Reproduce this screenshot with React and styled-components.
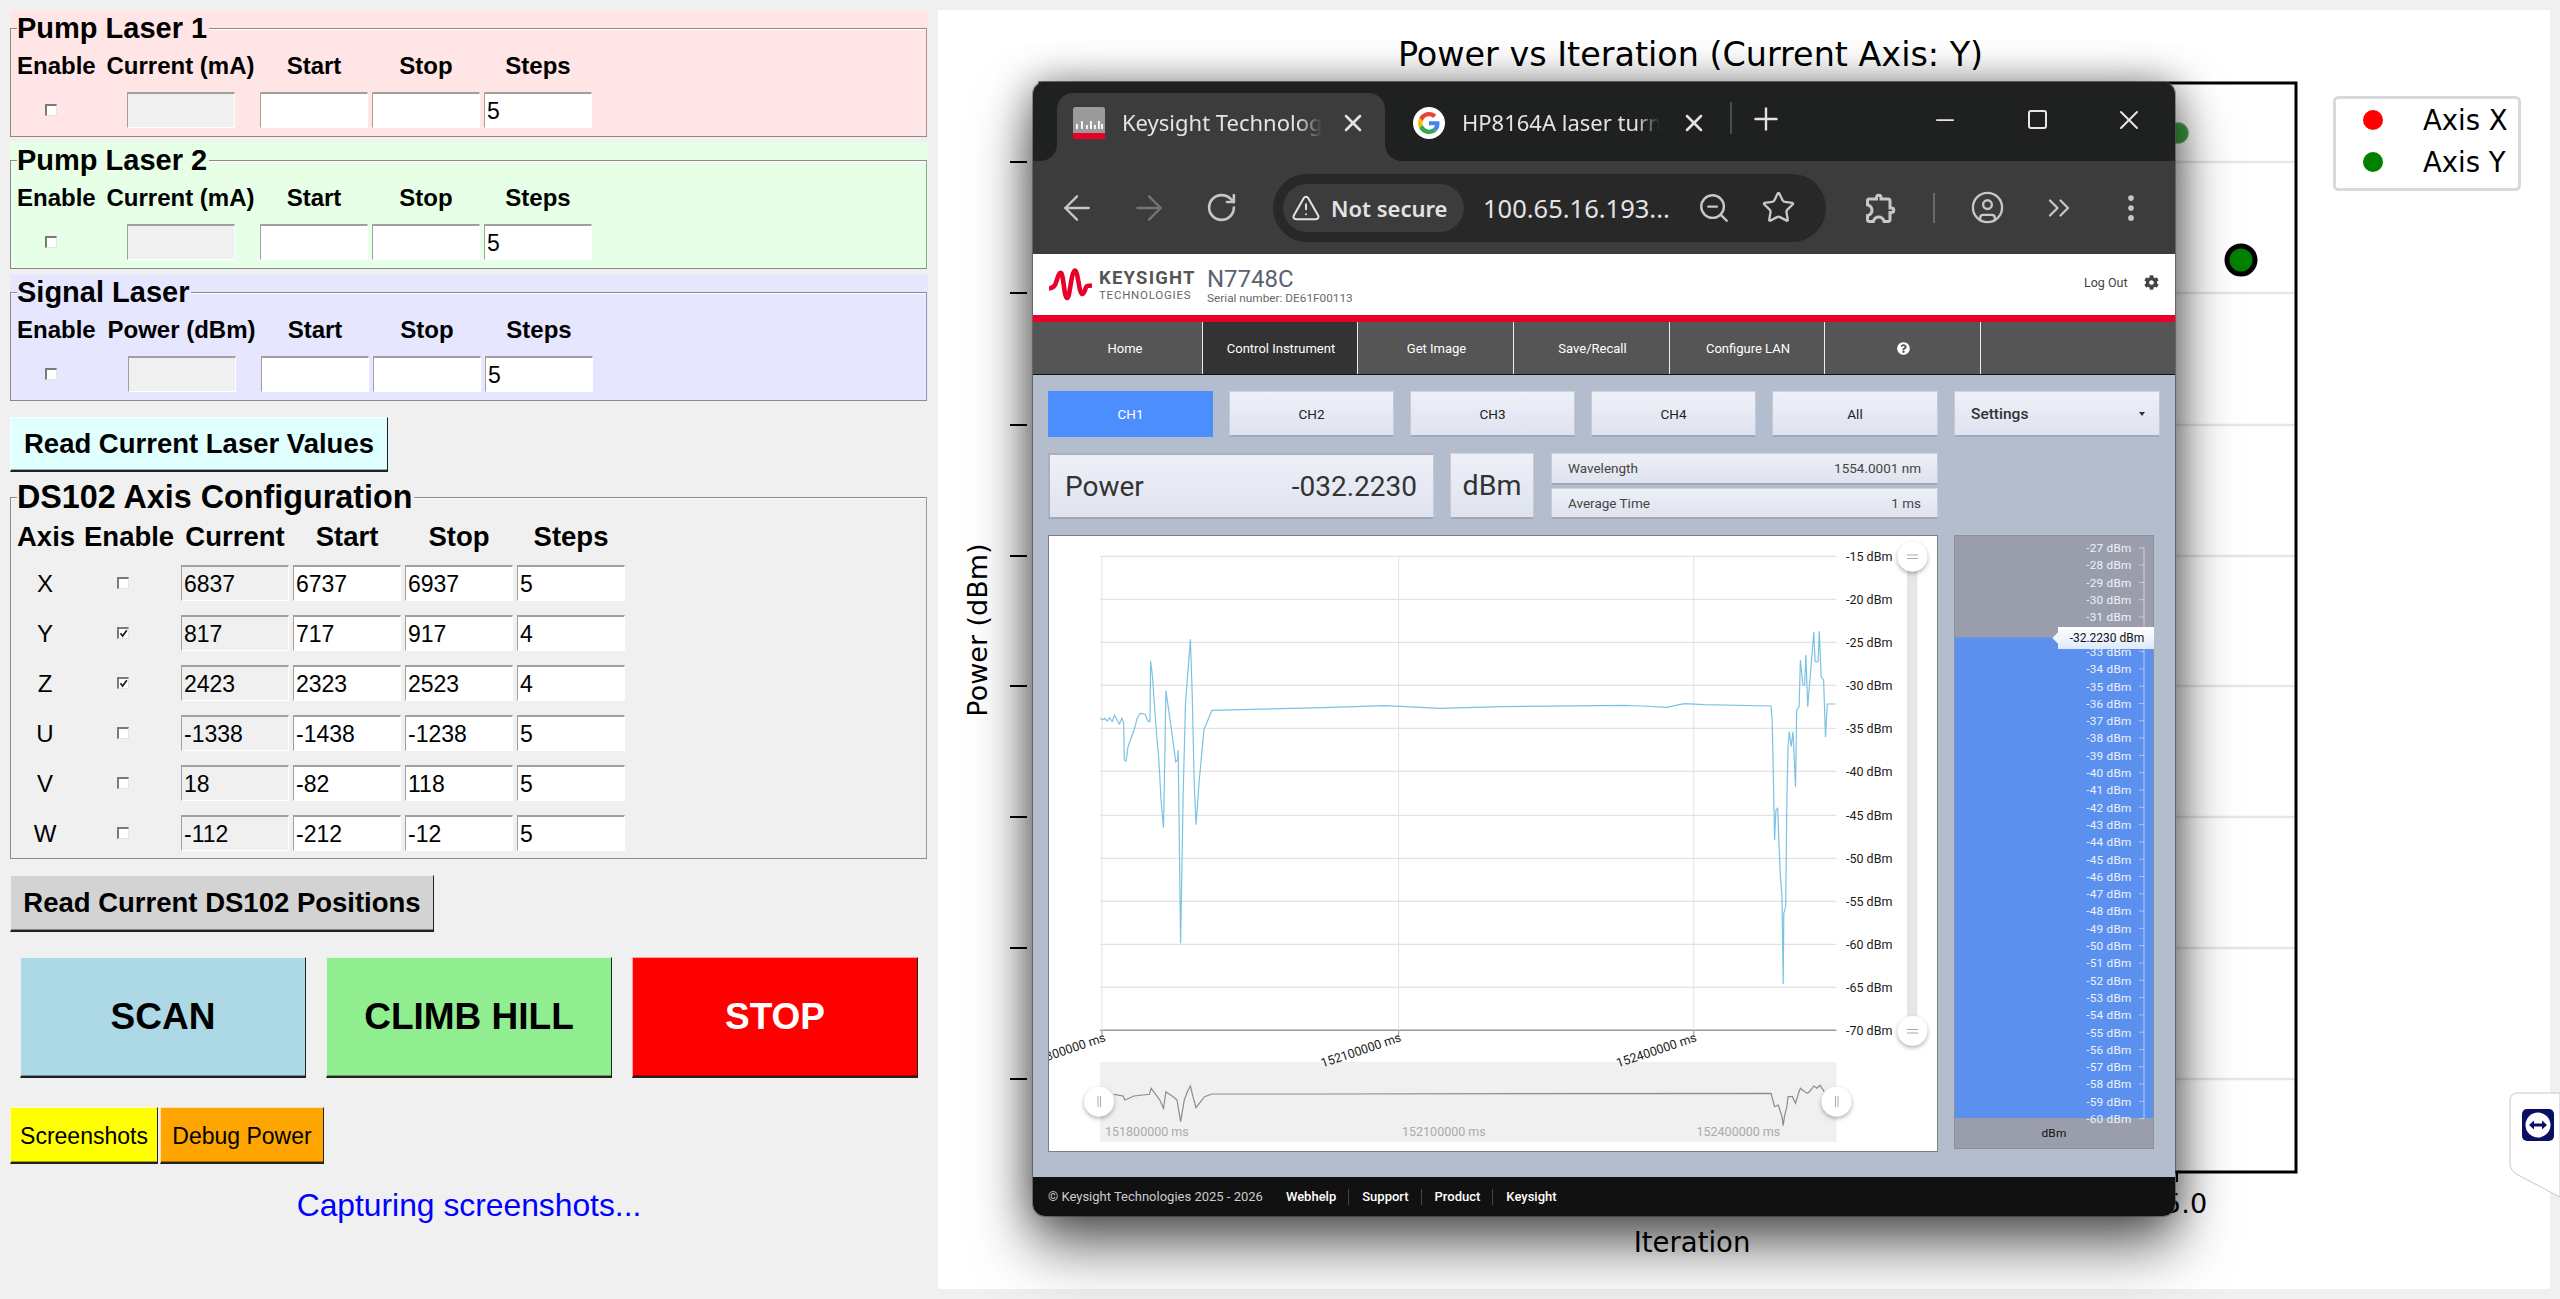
import React from 'react';
import styled, { createGlobalStyle } from 'styled-components';
import { ArrowLeft, ArrowRight, RotateCw, TriangleAlert, ZoomOut, Star, CircleUser, ChevronsRight, EllipsisVertical, X, Plus, Minus } from 'lucide-react';
import { FaCog, FaQuestionCircle } from 'react-icons/fa';
import { MdOutlineExtension } from 'react-icons/md';

const Global = createGlobalStyle`
  html, body { margin: 0; padding: 0; background: #f0f0f0; }
  * { box-sizing: border-box; }
`;

const Page = styled.div`
  position: relative; width: 2560px; height: 1299px; overflow: hidden;
  display: flex; background: #f0f0f0; font-family: "Liberation Sans", Arial, sans-serif; color: #000;
`;

/* ---------- left control column ---------- */
const Controls = styled.div`
  width: 938px; flex: none; padding: 10px 0 0 10px; display: flex; flex-direction: column; align-items: flex-start;
`;
const Group = styled.section`
  width: 918px; height: 127px; padding-top: 18px; margin-bottom: 5px; background: ${p => p.$bg};
`;
const Frame = styled.div`
  width: 917px; border: 1px solid #8a8a8a; border-right-color: #9a9a9a;
  box-shadow: inset 0 1px 0 #fff; padding-left: 6px;
  height: ${p => p.$h}px; margin-top: ${p => p.$mt || 0}px;
`;
const Legend = styled.div`
  display: table; margin-top: ${p => p.$big ? -19 : -18}px; padding-right: 2px;
  font-weight: 700; font-size: ${p => p.$big ? 32.3 : 29}px; line-height: ${p => p.$big ? 37 : 35}px;
  background: ${p => p.$bg};
`;
const LaserGrid = styled.div`
  display: grid; margin-top: 8px; row-gap: 14px;
  grid-template-columns: ${p => p.$shift ? 87 : 86}px 155px 112px 112px 112px;
  grid-auto-rows: auto;
`;
const AxisGrid = styled.div`
  display: grid; margin-top: 9px; row-gap: 14px;
  grid-template-columns: 67px 95px 112px 112px 112px 112px;
`;
const Head = styled.div`
  font-weight: 700; font-size: ${p => p.$big ? 27.5 : 24}px; line-height: 24px; height: 24px;
  white-space: nowrap; justify-self: ${p => p.$start ? 'start' : 'center'};
  margin-bottom: ${p => p.$big ? 2 : 0}px;
`;
const CheckCell = styled.div`
  height: 36px; display: flex; align-items: center; padding-left: ${p => p.$pad}px;
`;
const Tick = styled.span`
  display: block; width: 12px; height: 12px; background: #fff;
  border-top: 2px solid #7a7a7a; border-left: 2px solid #7a7a7a;
  border-right: 1px solid #e4e4e4; border-bottom: 1px solid #e4e4e4;
  svg { display: block; width: 9px; height: 9px; }
`;
const Entry = styled.input`
  width: 108px; height: 36px; justify-self: center; padding: 2px 0 0 2px; outline: none;
  font: 23px/30px "Liberation Sans", Arial, sans-serif; color: #000;
  background: ${p => p.$off ? '#f0f0f0' : '#fff'};
  border-top: 2px solid #a0a0a0; border-left: 1px solid #a0a0a0;
  border-right: 1px solid #fff; border-bottom: 1px solid #fff; border-radius: 0;
`;
const AxisName = styled.div`
  width: 56px; height: 36px; line-height: 38px; text-align: center; font-size: 24px;
`;
const RaisedButton = styled.button`
  display: flex; align-items: center; justify-content: center; padding: ${p => p.$plain ? '3px 0 0' : 0}; white-space: nowrap; cursor: default;
  width: ${p => p.$w}px; height: ${p => p.$h}px;
  margin: ${p => p.$m || 0};
  background: ${p => p.$bg}; color: ${p => p.$fg || '#000'};
  font-family: "Liberation Sans", Arial, sans-serif;
  font-size: ${p => p.$fs}px; font-weight: ${p => p.$plain ? 400 : 700};
  border-top: 1px solid rgba(255,255,255,.65); border-left: 1px solid rgba(255,255,255,.65);
  border-right: 1px solid #222; border-bottom: 2px solid #222; border-radius: 0;
  box-shadow: inset 0 -1px 0 rgba(0,0,0,.35);
`;
const ActionRow = styled.div`
  display: flex; gap: 20px; padding-left: 10px; margin-top: 25px;
`;
const ToolRow = styled.div`
  display: flex; gap: 2px; margin-top: 29px;
`;
const Status = styled.div`
  width: 918px; text-align: center; margin-top: 23px; color: #0000ff; font-size: 31.8px; line-height: 36px;
`;

/* ---------- matplotlib plot ---------- */
const PlotPanel = styled.div`
  flex: 1; margin: 10px 10px 10px 0; background: #fff; height: 1279px;
`;
const PlotSvg = styled.svg`
  display: block; width: 1612px; height: 1279px;
`;
const PlotText = styled.text`
  font-family: "DejaVu Sans", sans-serif; font-size: ${p => p.$fs}px; fill: #000;
`;

/* ---------- browser window ---------- */
const Win = styled.div`
  position: absolute; left: 1033px; top: 82px; width: 1142px; height: 1134px;
  display: flex; flex-direction: column; border-radius: 12px;
  box-shadow: 0 30px 60px rgba(0,0,0,.6), 0 0 38px rgba(0,0,0,.42), 0 0 0 1px rgba(130,130,130,.6);
  font-family: Roboto, "Noto Sans", sans-serif;
`;
const TabStrip = styled.div`
  height: 79px; flex: none; display: flex; align-items: flex-end; padding-left: 24px;
  background: #1f2121; border-radius: 12px 12px 0 0; color: #e3e3e3;
`;
const ActiveTab = styled.div`
  position: relative; width: 328px; height: 68px; padding: 0 0 8px 16px; display: flex; align-items: center;
  background: #3c3c3c; border-radius: 16px 16px 0 0;
  &::before, &::after { content: ""; position: absolute; bottom: 0; width: 16px; height: 16px; }
  &::before { left: -16px; background: radial-gradient(circle at 0 0, #1f2121 15.5px, #3c3c3c 16px); }
  &::after { right: -16px; background: radial-gradient(circle at 100% 0, #1f2121 15.5px, #3c3c3c 16px); }
`;
const IdleTab = styled.div`
  height: 68px; padding: 0 0 8px 28px; display: flex; align-items: center;
`;
const TabTitle = styled.div`
  width: ${p => p.$w}px; margin: -2px 0 0 ${p => p.$ml}px; overflow: hidden; white-space: nowrap;
  font: 22px/30px "Noto Sans", sans-serif; color: #e3e3e3;
  -webkit-mask-image: linear-gradient(90deg, #000 88%, transparent 100%);
  mask-image: linear-gradient(90deg, #000 88%, transparent 100%);
`;
const IconSlot = styled.span`
  display: flex; align-items: center; justify-content: center; flex: none;
  width: ${p => p.$w}px; margin-left: ${p => p.$ml || 0}px; color: ${p => p.$c || '#c7c7c7'};
`;
const PlusSlot = styled(IconSlot)`
  align-self: center; margin-top: 1px; margin-bottom: 6px;
`;
const TabDivider = styled.span`
  width: 2px; height: 32px; margin: 0 0 8px 20px; background: #4a4c4c; flex: none; align-self: center;
`;
const WinControls = styled.div`
  margin-left: auto; height: 79px; display: flex; align-self: flex-start;
`;
const WinBtn = styled.div`
  width: 92px; height: 79px; display: flex; align-items: center; justify-content: center; color: #e6e6e6; padding-bottom: 4px;
`;
const MaxBox = styled.span`
  width: 19px; height: 19px; border: 2px solid #e6e6e6; border-radius: 3px;
`;
const Toolbar = styled.div`
  height: 93px; flex: none; background: #3c3c3c; display: flex; align-items: center; padding-left: 8px;
`;
const Omnibox = styled.div`
  width: 553px; height: 68px; margin-left: 16px; border-radius: 34px; background: #282828;
  display: flex; align-items: center; padding-left: 10px; color: #e3e3e3; flex: none;
`;
const Chip = styled.div`
  width: 181px; height: 48px; border-radius: 24px; background: #3c3c3c; flex: none;
  display: flex; align-items: center; padding-left: 8px; gap: 10px;
  font: 600 22px "Noto Sans", sans-serif; color: #e3e3e3; white-space: nowrap;
`;
const Url = styled.div`
  width: 210px; margin-left: 19px; font: 25.5px "Noto Sans", sans-serif; white-space: nowrap; color: #e3e3e3;
`;
const ToolDivider = styled.span`
  width: 2px; height: 30px; margin-left: 34px; background: #6a6a6a; flex: none;
`;

const SiteHead = styled.div`
  height: 61px; flex: none; background: #fff; display: flex; align-items: center; padding: 1px 0 0 16px;
`;
const BrandName = styled.div`
  margin-left: 7px; display: flex; flex-direction: column; width: 108px; color: #555; line-height: 1;
`;
const BrandTop = styled.span`font-weight: 700; font-size: 18.5px; letter-spacing: 1.2px; margin-bottom: 3px;`;
const BrandSub = styled.span`font-size: 11.5px; letter-spacing: .75px; color: #666;`;
const Model = styled.div`display: flex; flex-direction: column; color: #5a6270; line-height: 1;`;
const ModelName = styled.span`font-size: 24px; margin: 1px 0 2px;`;
const Serial = styled.span`font-size: 11.8px; color: #6a6a6a;`;
const Logout = styled.div`
  margin-left: auto; width: 91px; display: flex; align-items: center; gap: 16px; font-size: 12.5px; color: #444; margin-bottom: 6px;
`;
const RedBar = styled.div`height: 7px; flex: none; background: #e90029;`;
const Nav = styled.nav`
  height: 53px; flex: none; display: flex; background: #555; border-bottom: 1px solid #111;
`;
const NavItem = styled.div`
  width: ${p => p.$w}px; padding-left: ${p => p.$pl || 2}px; display: flex; align-items: center; justify-content: center;
  border-right: 1px solid #eee; color: #fff; font-size: 13px;
  background: ${p => p.$on ? '#333' : 'transparent'};
`;
const Body = styled.main`
  flex: 1; background: #b3bdcd; padding: 16px 0 0 15px; display: flex; flex-direction: column; gap: 16px;
`;
const Row = styled.div`display: flex; gap: 16px; align-items: flex-start;`;
const Panel = styled.div`
  background: linear-gradient(#eef0f8, #dfe3ef); border: 1px solid #c4c9d4; border-bottom: 2px solid #a2a8b5; border-top: 1px solid #d0d4de;
`;
const ChBtn = styled(Panel)`
  width: ${p => p.$w || 165}px; height: 46px; display: flex; align-items: center; justify-content: center;
  font-size: 13.5px; color: #222;
  ${p => p.$on && 'background: #4d8eff; color: #fff; border: none;'}
`;
const SettingsBtn = styled(Panel)`
  width: 206px; height: 46px; display: flex; align-items: center; justify-content: space-between; padding: 0 14px 0 16px;
  font-size: 15.5px; font-weight: 500; color: #333;
`;
const Caret = styled.span`
  width: 0; height: 0; border-left: 3px solid transparent; border-right: 3px solid transparent; border-top: 4px solid #333;
`;
const PowerBox = styled(Panel)`
  width: 386px; height: 66px; display: flex; align-items: center; justify-content: space-between; padding: 0 16px 0 15px;
  font-size: 28px; color: #333; border-top: 2px solid #aab0bd; border-left: 2px solid #aab0bd;
`;
const UnitBox = styled(Panel)`
  width: 84px; height: 66px; display: flex; align-items: center; justify-content: center; font-size: 28.5px; color: #333;
`;
const InfoCol = styled.div`
  width: 387px; margin-left: 1px; display: flex; flex-direction: column; gap: 3px;
`;
const InfoLine = styled(Panel)`
  height: 31.5px; display: flex; align-items: center; justify-content: space-between; padding: 0 16px; font-size: 13.5px; color: #444;
`;
const ChartBox = styled.div`
  width: 890px; height: 617px; background: #fff; border: 1px solid #7f7f7f; flex: none;
  svg { display: block; width: 888px; height: 615px; }
`;
const ChartText = styled.text`
  font-family: Roboto, sans-serif; font-size: 12.5px; fill: ${p => p.$c || '#1a1a1a'};
`;
const Handle = styled.circle`
  fill: #fff; filter: drop-shadow(0 2px 2px rgba(0,0,0,.3));
`;
const MeterBox = styled.div`
  position: relative; width: 200px; height: 614px; border: 1px solid #8c919e; background: #9a9eac; flex: none;
  svg { display: block; width: 198px; height: 612px; }
`;
const MeterText = styled.text`
  font-family: Roboto, sans-serif; font-size: 11.8px; letter-spacing: .2px; fill: ${p => p.$c || '#eef2fb'};
`;
const Readout = styled.div`
  position: absolute; left: 103px; right: -1px; top: 91px; height: 22px; display: flex; align-items: center; justify-content: center;
  background: linear-gradient(#fff, #dfe8fa); font-size: 12px; color: #111; padding-left: 2px;
  &::before { content: ""; position: absolute; left: -4px; top: 7px; width: 8px; height: 8px; background: #f2f5fc; transform: rotate(45deg); }
`;
const Foot = styled.footer`
  height: 39px; flex: none; background: #111; border-radius: 0 0 12px 12px; display: flex; align-items: center; padding-left: 15px; font-size: 13px; color: #ccc;
`;
const FootLink = styled.span`
  color: #fff; font-weight: 500; padding: 0 12px 0 13px; border-left: ${p => p.$first ? 'none' : '1px solid #444'};
  line-height: 16px; margin-left: ${p => p.$first ? 10 : 0}px;
`;
const TeamTab = styled.svg`
  position: absolute; left: 2508px; top: 1091px; width: 52px; height: 108px;
`;

/* ---------- drawings ---------- */
const TickMark = () => (
  <svg viewBox="0 0 9 9"><path d="M1.5 4.2 3.6 7 7.8 1.2" fill="none" stroke="#222" strokeWidth="1.8" /></svg>
);

const Favicon = () => (
  <svg width="32" height="32" viewBox="0 0 32 32">
    <rect width="32" height="32" rx="2.5" fill="#9b9b9b" />
    <rect y="26" width="32" height="6" fill="#e90029" />
    {[[3, 17], [8, 14], [13, 18], [17, 14], [21, 18], [25, 14], [28, 17]].map(([x, y]) => (
      <rect key={x} x={x} y={y} width="1.8" height={22 - y} fill="#fff" />
    ))}
  </svg>
);

const GoogleIcon = () => (
  <svg width="32" height="32" viewBox="0 0 32 32">
    <circle cx="16" cy="16" r="16" fill="#fff" />
    <g transform="translate(5 5) scale(.4583)">
      <path fill="#EA4335" d="M24 9.5c3.54 0 6.71 1.22 9.21 3.6l6.85-6.85C35.9 2.38 30.47 0 24 0 14.62 0 6.51 5.38 2.56 13.22l7.98 6.19C12.43 13.72 17.74 9.5 24 9.5z" />
      <path fill="#4285F4" d="M46.98 24.55c0-1.57-.15-3.09-.38-4.55H24v9.02h12.94c-.58 2.96-2.26 5.48-4.78 7.18l7.73 6c4.51-4.18 7.09-10.36 7.09-17.65z" />
      <path fill="#FBBC05" d="M10.53 28.59c-.48-1.45-.76-2.99-.76-4.59s.27-3.14.76-4.59l-7.98-6.19C.92 16.46 0 20.12 0 24c0 3.88.92 7.54 2.56 10.78l7.97-6.19z" />
      <path fill="#34A853" d="M24 48c6.48 0 11.93-2.13 15.89-5.81l-7.73-6c-2.15 1.45-4.92 2.3-8.16 2.3-6.26 0-11.57-4.22-13.47-9.91l-7.98 6.19C6.51 42.62 14.62 48 24 48z" />
    </g>
  </svg>
);

const KeysightWave = () => (
  <svg width="43" height="34" viewBox="0 0 43 34">
    <path d="M0 20.5 C3 20 4 20 6 17 C8 13 9.5 4 12 5 C14.5 6 15 29 18 30 C21 31 22 3 26 2.5 C29 3 30 25 33 26 C36 26 36.5 18 38 18 L43 17.5" fill="none" stroke="#e90029" strokeWidth="4.6" strokeLinejoin="round" />
  </svg>
);

const zx = x => 1030 + x / 1.633;
const zy = y => 530 + y / 3;
const ny = y => 960 + y / 3;

const traceZ = [[115,565],[118,570],[122,565],[126,573],[130,563],[134,575],[138,556],[142,570],[146,582],[150,565],[153,580],[154,690],[157,693],[160,650],[165,625],[170,600],[175,565],[180,550],[188,552],[192,572],[196,575],[197,392],[200,440],[203,520],[207,620],[210,680],[212,740],[214,810],[218,893],[220,700],[222,482],[228,560],[234,640],[238,695],[241,690],[242,660],[246,1240],[250,800],[254,520],[258,420],[262,328],[265,500],[268,750],[271,884],[276,760],[284,600],[297,541],[480,533],[580,527],[670,535],[770,530],[970,526],[1000,528],[1040,532],[1060,524],[1070,521],[1100,524],[1210,528],[1212,570],[1214,750],[1216,930],[1218,840],[1221,835],[1223,930],[1225,1030],[1228,1100],[1230,1362],[1231,1150],[1234,1130],[1236,800],[1238,650],[1240,605],[1243,650],[1246,605],[1250,770],[1252,540],[1256,530],[1258,390],[1262,465],[1265,465],[1267,375],[1270,530],[1274,440],[1280,306],[1282,395],[1287,395],[1289,304],[1292,440],[1296,450],[1299,622],[1302,522],[1315,522]];
const tracePts = traceZ.map(([x, y]) => `${zx(x).toFixed(1)},${zy(y).toFixed(1)}`).join(' ');

const navZ = [[137,403],[152,408],[155,420],[170,408],[195,403],[198,385],[212,420],[218,445],[222,395],[235,412],[240,420],[246,485],[252,420],[257,395],[262,378],[266,410],[271,443],[285,410],[297,402],[480,402],[1210,400],[1216,440],[1222,435],[1228,470],[1230,497],[1232,470],[1236,440],[1238,410],[1245,410],[1250,430],[1255,400],[1258,385],[1265,395],[1270,400],[1275,390],[1280,378],[1285,385],[1290,376],[1297,395]];
const navPts = navZ.map(([x, y]) => `${zx(x).toFixed(1)},${ny(y).toFixed(1)}`).join(' ');

const dbmLines = [-15,-20,-25,-30,-35,-40,-45,-50,-55,-60,-65,-70].map((v, i) => ({ v, y: 556.3 + i * 43 + (i >= 6 ? 1 : 0) }));
const timeLines = [1102, 1398.6, 1693.8];

const PowerChart = () => (
  <svg viewBox="1049 536 888 615">
    {dbmLines.map(l => (
      <g key={l.v}>
        <line x1="1100" x2="1836.5" y1={l.y} y2={l.y} stroke={l.v === -70 ? '#999' : '#e2e2e2'} strokeWidth={l.v === -70 ? 1.4 : 1.2} />
        <ChartText x="1846" y={l.y + 5}>{l.v} dBm</ChartText>
      </g>
    ))}
    {timeLines.map(x => <line key={x} x1={x} x2={x} y1="556" y2="1034" stroke="#e2e2e2" />)}
    {timeLines.map(x => <line key={`t${x}`} x1={x} x2={x} y1="1030" y2="1036" stroke="#999" />)}
    <polyline points={tracePts} fill="none" stroke="#7cc2e4" strokeWidth="1.2" />
    <rect x="1907" y="556" width="10.5" height="475" fill="#e6e6e6" />
    <Handle cx="1912.4" cy="556.7" r="15" />
    <Handle cx="1912.4" cy="1031" r="15" />
    <path d="M1907 555h11M1907 558.5h11M1907 1029.5h11M1907 1033h11" stroke="#aaa" strokeWidth="1.2" />
    <rect x="1100" y="1062" width="736.5" height="80" fill="#f0f0f0" />
    {[[1106.5, '151800000 ms'], [1402, '152100000 ms'], [1697.5, '152400000 ms']].map(([x, t]) => (
      <ChartText key={t} x={x} y="1041" textAnchor="end" transform={`rotate(-18.5 ${x} 1041)`}>{t}</ChartText>
    ))}
    <polyline points={navPts} fill="none" stroke="#8c8c8c" strokeWidth="1.2" />
    {[[1105, '151800000 ms'], [1402, '152100000 ms'], [1696.5, '152400000 ms']].map(([x, t]) => (
      <ChartText key={t} x={x} y="1136" $c="#aaa">{t}</ChartText>
    ))}
    <Handle cx="1099" cy="1101.7" r="15" />
    <Handle cx="1836.5" cy="1101.7" r="15" />
    <path d="M1098 1096v11M1100.5 1096v11M1835.5 1096v11M1838 1096v11" stroke="#aaa" strokeWidth="1" />
  </svg>
);

const meterVals = Array.from({ length: 34 }, (_, i) => -27 - i);
const Meter = () => (
  <svg viewBox="1955 536 198 612">
    <rect x="1955" y="637.5" width="198" height="480.5" fill="#5b90ee" />
    {meterVals.map((v, i) => {
      const y = 547.8 + i * 17.3;
      return (
        <g key={v}>
          <MeterText x="2131.5" y={y + 4.3} textAnchor="end">{v} dBm</MeterText>
          <line x1="2139" x2="2144" y1={y} y2={y} stroke="rgba(255,255,255,.45)" />
        </g>
      );
    })}
    <line x1="2144" x2="2144" y1="547.8" y2="1118.7" stroke="rgba(255,255,255,.55)" />
    <MeterText x="2054" y="1137" textAnchor="middle" $c="#111">dBm</MeterText>
  </svg>
);

const plotTicks = [162, 293, 425, 556, 686, 817, 948, 1079];
const Plot = () => (
  <PlotSvg viewBox="938 10 1612 1279">
    <PlotText x="1690.5" y="66" textAnchor="middle" $fs={33.4}>Power vs Iteration (Current Axis: Y)</PlotText>
    {plotTicks.map(y => <line key={y} x1="1036" x2="2295" y1={y} y2={y} stroke="#e6e6e6" strokeWidth="2.4" />)}
    <rect x="1040" y="83" width="1256" height="1089" fill="none" stroke="#000" strokeWidth="3" />
    {plotTicks.map(y => <line key={`t${y}`} x1="1010" x2="1027" y1={y} y2={y} stroke="#000" strokeWidth="2" />)}
    <line x1="2177" x2="2177" y1="1172" y2="1182" stroke="#000" strokeWidth="2" />
    <PlotText x="2177" y="1213" textAnchor="middle" $fs={27}>15.0</PlotText>
    <circle cx="2178" cy="133" r="10" fill="#008000" stroke="#2a8a2a" strokeWidth="1.5" opacity=".75" />
    <circle cx="2241" cy="260" r="14" fill="#008000" stroke="#000" strokeWidth="5" />
    <rect x="2334.5" y="97.5" width="185" height="92" rx="4" fill="#fff" stroke="#d9d9d9" strokeWidth="3" />
    <circle cx="2373" cy="120" r="10" fill="#ff0000" />
    <circle cx="2373" cy="162" r="10" fill="#008000" />
    <PlotText x="2423" y="130" $fs={27.5}>Axis X</PlotText>
    <PlotText x="2423" y="172" $fs={27.5}>Axis Y</PlotText>
    <PlotText x="1692" y="1252" textAnchor="middle" $fs={27.5}>Iteration</PlotText>
    <PlotText x="987" y="630" textAnchor="middle" $fs={27} transform="rotate(-90 987 630)">Power (dBm)</PlotText>
  </PlotSvg>
);

const Check = ({ on, pad }) => (
  <CheckCell $pad={pad}><Tick>{on && <TickMark />}</Tick></CheckCell>
);

const LaserSection = ({ title, bg, label, shift }) => (
  <Group $bg={bg}>
    <Frame $h={109}>
      <Legend $bg={bg}>{title}</Legend>
      <LaserGrid $shift={shift}>
        <Head $start>Enable</Head><Head>{label}</Head><Head>Start</Head><Head>Stop</Head><Head>Steps</Head>
        <Check pad={28} />
        <Entry readOnly $off value="" />
        <Entry readOnly value="" />
        <Entry readOnly value="" />
        <Entry readOnly value="5" />
      </LaserGrid>
    </Frame>
  </Group>
);

const axes = [
  ['X', false, '6837', '6737', '6937', '5'],
  ['Y', true, '817', '717', '917', '4'],
  ['Z', true, '2423', '2323', '2523', '4'],
  ['U', false, '-1338', '-1438', '-1238', '5'],
  ['V', false, '18', '-82', '118', '5'],
  ['W', false, '-112', '-212', '-12', '5'],
];

const Left = () => (
  <Controls>
    <LaserSection title="Pump Laser 1" bg="#ffe5e5" label="Current (mA)" />
    <LaserSection title="Pump Laser 2" bg="#e6ffe6" label="Current (mA)" />
    <LaserSection title="Signal Laser" bg="#e6e6ff" label="Power (dBm)" shift />
    <RaisedButton $w={378} $h={55} $bg="#e0ffff" $fs={27.5} $m="11px 0 0">Read Current Laser Values</RaisedButton>
    <Frame $h={362} $mt={25}>
      <Legend $big $bg="#f0f0f0">DS102 Axis Configuration</Legend>
      <AxisGrid>
        <Head $big $start>Axis</Head><Head $big $start>Enable</Head><Head $big>Current</Head><Head $big>Start</Head><Head $big>Stop</Head><Head $big>Steps</Head>
        {axes.map(([name, on, cur, start, stop, steps]) => (
          <React.Fragment key={name}>
            <AxisName>{name}</AxisName>
            <Check on={on} pad={33} />
            <Entry readOnly $off value={cur} />
            <Entry readOnly value={start} />
            <Entry readOnly value={stop} />
            <Entry readOnly value={steps} />
          </React.Fragment>
        ))}
      </AxisGrid>
    </Frame>
    <RaisedButton $w={424} $h={57} $bg="#d3d3d3" $fs={27.5} $m="16px 0 0">Read Current DS102 Positions</RaisedButton>
    <ActionRow>
      <RaisedButton $w={286} $h={121} $bg="#add8e6" $fs={37}>SCAN</RaisedButton>
      <RaisedButton $w={286} $h={121} $bg="#90ee90" $fs={37}>CLIMB HILL</RaisedButton>
      <RaisedButton $w={286} $h={121} $bg="#ff0000" $fg="#fff" $fs={37}>STOP</RaisedButton>
    </ActionRow>
    <ToolRow>
      <RaisedButton $w={148} $h={57} $bg="#ffff00" $fs={23} $plain>Screenshots</RaisedButton>
      <RaisedButton $w={164} $h={57} $bg="#ffa500" $fs={23} $plain>Debug Power</RaisedButton>
    </ToolRow>
    <Status>Capturing screenshots...</Status>
  </Controls>
);

const Browser = () => (
  <Win>
    <TabStrip>
      <ActiveTab>
        <Favicon />
        <TabTitle $w={200} $ml={17}>Keysight Technologies</TabTitle>
        <IconSlot $w={32} $ml={15} $c="#e3e3e3"><X size={28} strokeWidth={2.2} /></IconSlot>
      </ActiveTab>
      <IdleTab>
        <GoogleIcon />
        <TabTitle $w={198} $ml={17}>HP8164A laser turn on</TabTitle>
        <IconSlot $w={32} $ml={18} $c="#e3e3e3"><X size={28} strokeWidth={2.2} /></IconSlot>
      </IdleTab>
      <TabDivider />
      <PlusSlot $w={36} $ml={16} $c="#e3e3e3"><Plus size={36} strokeWidth={1.6} /></PlusSlot>
      <WinControls>
        <WinBtn><Minus size={28} strokeWidth={1.5} /></WinBtn>
        <WinBtn><MaxBox /></WinBtn>
        <WinBtn><X size={32} strokeWidth={1.5} /></WinBtn>
      </WinControls>
    </TabStrip>
    <Toolbar>
      <IconSlot $w={72}><ArrowLeft size={40} strokeWidth={1.4} /></IconSlot>
      <IconSlot $w={72} $c="#757575"><ArrowRight size={40} strokeWidth={1.4} /></IconSlot>
      <IconSlot $w={72}><RotateCw size={33} strokeWidth={1.9} /></IconSlot>
      <Omnibox>
        <Chip><TriangleAlert size={30} strokeWidth={1.6} />Not secure</Chip>
        <Url>100.65.16.193...</Url>
        <IconSlot $w={36} $ml={3}><ZoomOut size={34} strokeWidth={1.7} /></IconSlot>
        <IconSlot $w={36} $ml={28}><Star size={35} strokeWidth={1.6} /></IconSlot>
      </Omnibox>
      <IconSlot $w={36} $ml={37}><MdOutlineExtension size={36} /></IconSlot>
      <ToolDivider />
      <IconSlot $w={36} $ml={34}><CircleUser size={35} strokeWidth={1.6} /></IconSlot>
      <IconSlot $w={36} $ml={36}><ChevronsRight size={40} strokeWidth={1.5} /></IconSlot>
      <IconSlot $w={36} $ml={36}><EllipsisVertical size={34} strokeWidth={2} /></IconSlot>
    </Toolbar>
    <SiteHead>
      <KeysightWave />
      <BrandName>
        <BrandTop>KEYSIGHT</BrandTop>
        <BrandSub>TECHNOLOGIES</BrandSub>
      </BrandName>
      <Model>
        <ModelName>N7748C</ModelName>
        <Serial>Serial number: DE61F00113</Serial>
      </Model>
      <Logout>Log Out <FaCog size={15} color="#444" /></Logout>
    </SiteHead>
    <RedBar />
    <Nav>
      <NavItem $w={170} $pl={15}>Home</NavItem>
      <NavItem $w={155} $on>Control Instrument</NavItem>
      <NavItem $w={156}>Get Image</NavItem>
      <NavItem $w={156}>Save/Recall</NavItem>
      <NavItem $w={155}>Configure LAN</NavItem>
      <NavItem $w={156}><FaQuestionCircle size={13} color="#fff" /></NavItem>
    </Nav>
    <Body>
      <Row>
        <ChBtn $on>CH1</ChBtn><ChBtn>CH2</ChBtn><ChBtn>CH3</ChBtn><ChBtn>CH4</ChBtn><ChBtn $w={166}>All</ChBtn>
        <SettingsBtn>Settings<Caret /></SettingsBtn>
      </Row>
      <Row>
        <PowerBox><span>Power</span><span>-032.2230</span></PowerBox>
        <UnitBox>dBm</UnitBox>
        <InfoCol>
          <InfoLine><span>Wavelength</span><span>1554.0001 nm</span></InfoLine>
          <InfoLine><span>Average Time</span><span>1 ms</span></InfoLine>
        </InfoCol>
      </Row>
      <Row>
        <ChartBox><PowerChart /></ChartBox>
        <MeterBox><Meter /><Readout>-32.2230 dBm</Readout></MeterBox>
      </Row>
    </Body>
    <Foot>
      © Keysight Technologies 2025 - 2026
      <FootLink $first>Webhelp</FootLink>
      <FootLink>Support</FootLink>
      <FootLink>Product</FootLink>
      <FootLink>Keysight</FootLink>
    </Foot>
  </Win>
);

export default function App() {
  return (
    <Page>
      <Global />
      <Left />
      <PlotPanel><Plot /></PlotPanel>
      <Browser />
      <TeamTab viewBox="0 0 52 108">
        <path d="M2 10 Q2 2 10 2 H52 V106 L10 84 Q2 80 2 72 Z" fill="#fff" stroke="#c4c8cc" strokeWidth="1" />
        <rect x="14" y="18" width="32" height="32" rx="5" fill="#0a0f66" />
        <circle cx="30" cy="34" r="12.5" fill="#fff" />
        <path d="M21 34 L26 29.5 V32.4 H34 V29.5 L39 34 L34 38.5 V35.6 H26 V38.5 Z" fill="#0a0f66" />
      </TeamTab>
    </Page>
  );
}
